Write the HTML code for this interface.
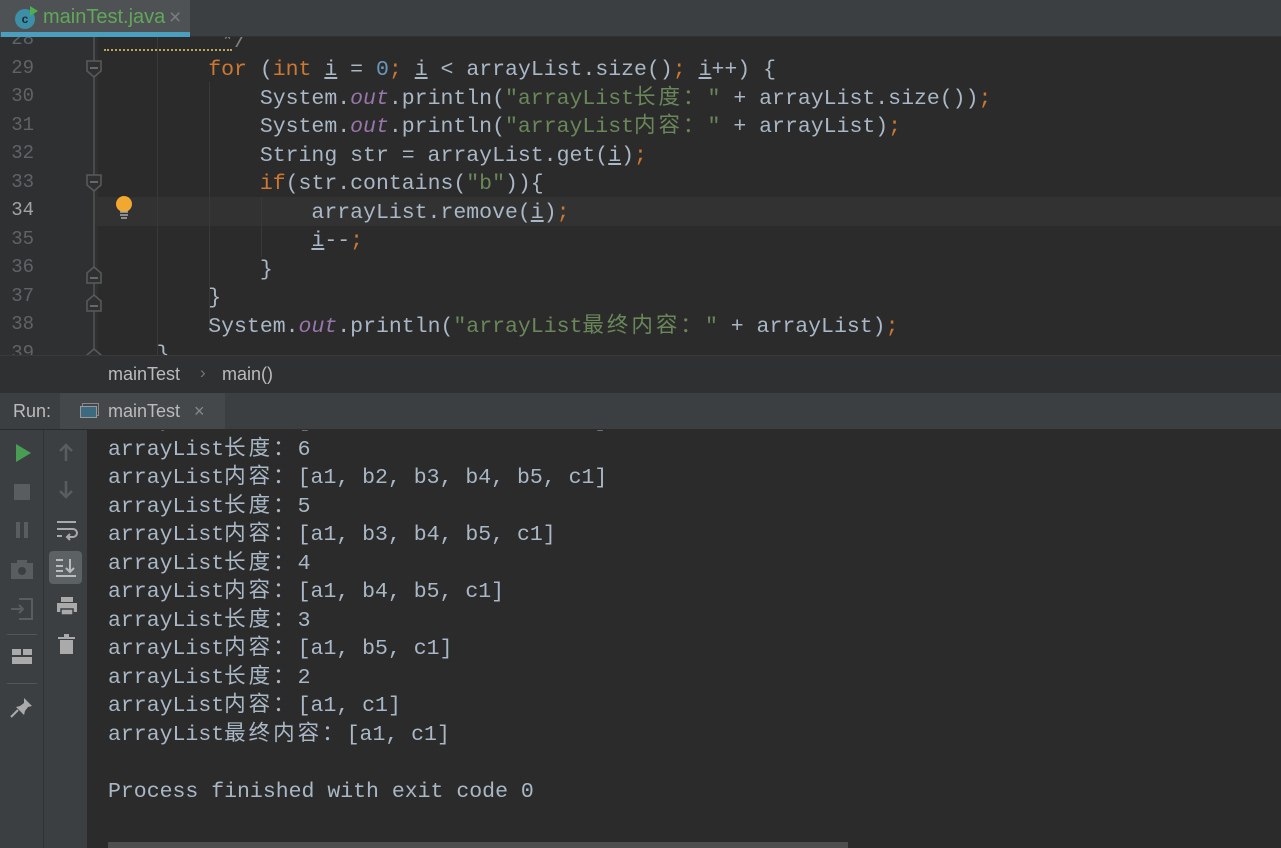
<!DOCTYPE html>
<html><head><meta charset="utf-8"><style>
*{margin:0;padding:0;box-sizing:border-box}
body{width:1281px;height:848px;overflow:hidden;background:#2b2b2b;position:relative;font-family:"Liberation Sans","Noto Sans CJK SC",sans-serif}
.abs{position:absolute}
.mono{font-family:"Liberation Mono","Noto Sans CJK SC",monospace;font-size:21.5px;white-space:pre;color:#a9b7c6}
.k{color:#cc7832}.s{color:#6a8759}.n{color:#6897bb}.f{color:#9876aa;font-style:italic}
.u{text-decoration:underline}
.c{letter-spacing:3px}
.ln{position:absolute;left:0;width:34px;text-align:right;font-family:"Liberation Mono",monospace;font-size:19px;color:#606366}
.cl{position:absolute;left:105px;height:28.5px;line-height:28.5px}
</style></head><body>
<div class="abs" style="left:0;top:0;width:1281px;height:37px;background:#3c3f41;border-bottom:1px solid #323232"></div>
<div class="abs" style="left:0;top:0;width:190px;height:37px;background:#4e5254"></div>
<div class="abs" style="left:1px;top:32px;width:189px;height:5px;background:#4a9fbf"></div>
<div class="abs" style="left:15px;top:9px;width:20px;height:20px;border-radius:50%;background:#3d8fa8;color:#1e2a30;font-size:12px;font-weight:bold;text-align:center;line-height:20px">c</div>
<div class="abs" style="left:30px;top:6px;width:0;height:0;border-top:5px solid transparent;border-bottom:5px solid transparent;border-left:8px solid #4caf50"></div>
<div class="abs" style="left:43px;top:6px;font-size:20px;color:#62a75a">mainTest.java</div>
<div class="abs" style="left:169px;top:6px;font-size:21px;color:#7a7d80">×</div>

<div class="abs" style="left:0;top:37px;width:1281px;height:318px;overflow:hidden">
 <div class="abs" style="left:0;top:0;width:98px;height:318px;background:#2f3032"></div>
 <div class="abs" style="left:95px;top:160px;width:1186px;height:29px;background:#323232"></div>
 <div class="abs" style="left:93px;top:0;width:2px;height:318px;background:#4a4a4a"></div>
 <div class="abs" style="left:157px;top:0;width:1px;height:318px;background:#393939"></div>
 <div class="abs" style="left:209px;top:45px;width:1px;height:250px;background:#393939"></div>
 <div class="abs" style="left:261px;top:160px;width:1px;height:60px;background:#393939"></div>
 <div class="abs" style="left:104px;top:10px;width:128px;height:4px;border-bottom:2px dotted #b5a65a"></div>
 <svg class="abs" style="left:86px;top:0" width="16" height="318">
  <g fill="#2f3032" stroke="#5a5a5a" stroke-width="1.5">
   <path d="M1 24h14v10l-7 6l-7-6z"/><path d="M1 138h14v10l-7 6l-7-6z"/>
   <path d="M1 236l7-6l7 6v10h-14z"/><path d="M1 264l7-6l7 6v10h-14z"/><path d="M1 318l7-6l7 6v10h-14z"/>
  </g>
  <g stroke="#7a7a7a" stroke-width="1.5"><path d="M4 31h8M4 145h8M4 241h8M4 269h8"/></g>
 </svg>
 <svg class="abs" style="left:114px;top:158px" width="20" height="26"><circle cx="10" cy="9" r="8" fill="#f0a830"/><path d="M6 17h8M6 20h8M7 23h6" stroke="#aaa" stroke-width="1.5"/></svg>
 <div class="ln" style="top:-9px">28</div>
 <div class="ln" style="top:19.5px">29</div>
 <div class="ln" style="top:48px">30</div>
 <div class="ln" style="top:76.5px">31</div>
 <div class="ln" style="top:105px">32</div>
 <div class="ln" style="top:133.5px">33</div>
 <div class="ln" style="top:162px;color:#a4a3a3">34</div>
 <div class="ln" style="top:190.5px">35</div>
 <div class="ln" style="top:219px">36</div>
 <div class="ln" style="top:247.5px">37</div>
 <div class="ln" style="top:276px">38</div>
 <div class="ln" style="top:304.5px">39</div>
 <div class="mono cl" style="top:-9.5px;color:#808080">         */</div>
 <div class="mono cl" style="top:19px">        <span class="k">for</span> (<span class="k">int</span> <span class="u">i</span> = <span class="n">0</span><span class="k">;</span> <span class="u">i</span> &lt; arrayList.size()<span class="k">;</span> <span class="u">i</span>++) {</div>
 <div class="mono cl" style="top:47.5px">            System.<span class="f">out</span>.println(<span class="s">"arrayList<span class="c">长度：</span>"</span> + arrayList.size())<span class="k">;</span></div>
 <div class="mono cl" style="top:76px">            System.<span class="f">out</span>.println(<span class="s">"arrayList<span class="c">内容：</span>"</span> + arrayList)<span class="k">;</span></div>
 <div class="mono cl" style="top:104.5px">            String str = arrayList.get(<span class="u">i</span>)<span class="k">;</span></div>
 <div class="mono cl" style="top:133px">            <span class="k">if</span>(str.contains(<span class="s">"b"</span>)){</div>
 <div class="mono cl" style="top:161.5px">                arrayList.remove(<span class="u">i</span>)<span class="k">;</span></div>
 <div class="mono cl" style="top:190px">                <span class="u">i</span>--<span class="k">;</span></div>
 <div class="mono cl" style="top:218.5px">            }</div>
 <div class="mono cl" style="top:247px">        }</div>
 <div class="mono cl" style="top:275.5px">        System.<span class="f">out</span>.println(<span class="s">"arrayList<span class="c">最终内容：</span>"</span> + arrayList)<span class="k">;</span></div>
 <div class="mono cl" style="top:304px">    }</div>
</div>
<div class="abs" style="left:0;top:355px;width:1281px;height:38px;background:#2f3032;border-top:1px solid #3a3a3a"></div>
<div class="abs" style="left:108px;top:364px;font-size:18px;color:#bbbbbb">mainTest</div>
<div class="abs" style="left:200px;top:363px;font-size:17px;color:#777">›</div>
<div class="abs" style="left:222px;top:364px;font-size:18px;color:#bbbbbb">main()</div>
<div class="abs" style="left:0;top:393px;width:1281px;height:37px;background:#3c3f41;border-bottom:1px solid #2b2b2b"></div>
<div class="abs" style="left:60px;top:393px;width:165px;height:36px;background:#45484a"></div>
<div class="abs" style="left:13px;top:401px;font-size:18px;color:#bbbbbb">Run:</div>
<div class="abs" style="left:82px;top:403px;width:17px;height:13px;border:1.5px solid #888"></div>
<div class="abs" style="left:80px;top:406px;width:17px;height:12px;border:1.5px solid #999;background:#3d6a80"></div>
<div class="abs" style="left:108px;top:401px;font-size:18px;color:#bbbbbb">mainTest</div>
<div class="abs" style="left:194px;top:401px;font-size:18px;color:#888">×</div>
<div class="abs" style="left:0;top:430px;width:88px;height:418px;background:#3c3f41"></div>
<div class="abs" style="left:43px;top:430px;width:1px;height:418px;background:#2f3133"></div>
<div class="abs" style="left:87px;top:430px;width:1px;height:418px;background:#2b2b2b"></div>
<div class="abs" style="left:16px;top:444px;width:0;height:0;border-top:9px solid transparent;border-bottom:9px solid transparent;border-left:15px solid #499c54"></div>
<div class="abs" style="left:14px;top:484px;width:16px;height:16px;background:#5a5d5f"></div>
<div class="abs" style="left:16px;top:522px;width:4px;height:16px;background:#5a5d5f"></div>
<div class="abs" style="left:24px;top:522px;width:4px;height:16px;background:#5a5d5f"></div>
<svg class="abs" style="left:10px;top:558px" width="24" height="24"><rect x="1" y="5" width="22" height="16" fill="#5a5d5f"/><rect x="7" y="2" width="10" height="4" fill="#5a5d5f"/><circle cx="12" cy="13" r="4" fill="#3c3f41"/></svg>
<svg class="abs" style="left:10px;top:597px" width="24" height="24"><path d="M9 2h13v20h-13" fill="none" stroke="#5a5d5f" stroke-width="2"/><path d="M1 12h12M9 8l4 4l-4 4" fill="none" stroke="#5a5d5f" stroke-width="2"/></svg>
<div class="abs" style="left:7px;top:634px;width:30px;height:1px;background:#555"></div>
<svg class="abs" style="left:12px;top:648px" width="20" height="18"><rect x="0" y="1" width="9" height="6" fill="#aaa"/><rect x="11" y="1" width="9" height="6" fill="#aaa"/><rect x="0" y="9" width="20" height="7" fill="#aaa"/></svg>
<div class="abs" style="left:7px;top:683px;width:30px;height:1px;background:#555"></div>
<svg class="abs" style="left:10px;top:696px" width="24" height="24"><path d="M14 2l8 8l-4 1l-3 4l-1 4l-8-8l4-1l4-3z" fill="#aaa"/><path d="M8 14l-7 7" stroke="#aaa" stroke-width="2"/></svg>
<svg class="abs" style="left:56px;top:441px" width="20" height="22"><path d="M10 20V4M4 10l6-6l6 6" fill="none" stroke="#5a5d5f" stroke-width="2.5"/></svg>
<svg class="abs" style="left:56px;top:479px" width="20" height="22"><path d="M10 2v16M4 12l6 6l6-6" fill="none" stroke="#5a5d5f" stroke-width="2.5"/></svg>
<svg class="abs" style="left:56px;top:519px" width="22" height="22"><path d="M1 3h19M1 10h16a4 4 0 0 1 0 8h-6M14 15l-3 3l3 3M1 17h5" fill="none" stroke="#aaa" stroke-width="2"/></svg>
<div class="abs" style="left:49px;top:551px;width:33px;height:33px;border-radius:4px;background:#5c6164"></div>
<svg class="abs" style="left:55px;top:557px" width="22" height="22"><path d="M1 3h7M1 9h7M1 14h7M1 19h20M15 2v13M11 11l4 4l4-4" fill="none" stroke="#bbb" stroke-width="2"/></svg>
<svg class="abs" style="left:56px;top:596px" width="22" height="22"><rect x="5" y="1" width="12" height="5" fill="#aaa"/><rect x="1" y="7" width="20" height="9" fill="#aaa"/><rect x="5" y="13" width="12" height="6" fill="#aaa" stroke="#3c3f41" stroke-width="1.5"/></svg>
<svg class="abs" style="left:57px;top:634px" width="20" height="22"><rect x="1" y="3" width="17" height="2" fill="#aaa"/><rect x="7" y="0" width="5" height="3" fill="#aaa"/><path d="M3 6h13v14h-13z" fill="#aaa"/></svg>
<div class="abs" style="left:88px;top:430px;width:1193px;height:418px;overflow:hidden">
 <div class="mono" style="position:absolute;left:20px;top:-23px;line-height:28.5px">arrayList<span class="c">内容：</span>[a1, b2, b3, b4, b5, c1]
arrayList<span class="c">长度：</span>6
arrayList<span class="c">内容：</span>[a1, b2, b3, b4, b5, c1]
arrayList<span class="c">长度：</span>5
arrayList<span class="c">内容：</span>[a1, b3, b4, b5, c1]
arrayList<span class="c">长度：</span>4
arrayList<span class="c">内容：</span>[a1, b4, b5, c1]
arrayList<span class="c">长度：</span>3
arrayList<span class="c">内容：</span>[a1, b5, c1]
arrayList<span class="c">长度：</span>2
arrayList<span class="c">内容：</span>[a1, c1]
arrayList<span class="c">最终内容：</span>[a1, c1]

Process finished with exit code 0</div>
 <div class="abs" style="left:20px;top:412px;width:740px;height:6px;background:#4e4e4e"></div>
</div>
</body></html>
